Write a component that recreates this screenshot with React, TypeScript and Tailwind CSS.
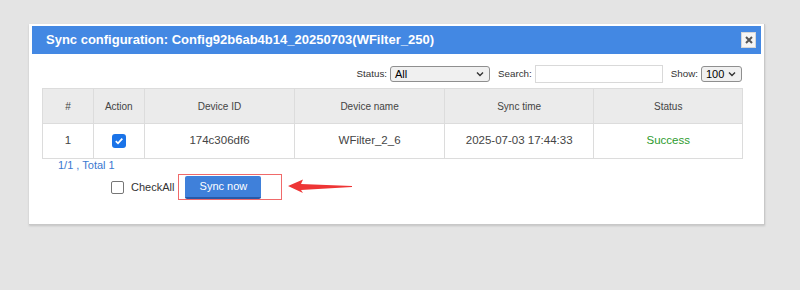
import React from 'react';

const font = { fontFamily: '"Liberation Sans", Arial, sans-serif' };

function Chevron() {
  return (
    <svg width="8" height="6" viewBox="0 0 8 6" className="shrink-0">
      <path d="M1 1.5 L4 4.5 L7 1.5" fill="none" stroke="#333" strokeWidth="1.4" />
    </svg>
  );
}

function FakeSelect({ value, width }: { value: string; width: string }) {
  return (
    <div className={`${width} h-[16px] flex items-center justify-between pl-[4px] pr-[5px] rounded-[3px] border border-[#8f8f8f] bg-[#f0f0f0] text-[11px] text-black`}>
      <span>{value}</span>
      <Chevron />
    </div>
  );
}

export default function App() {
  const cols = [
    { label: '#', w: 'w-[51px]' },
    { label: 'Action', w: 'w-[51px]' },
    { label: 'Device ID', w: 'w-[151px]' },
    { label: 'Device name', w: 'w-[150px]' },
    { label: 'Sync time', w: 'w-[150px]' },
    { label: 'Status', w: 'w-[148px]' },
  ];

  return (
    <div className="w-[800px] h-[290px] bg-[#e4e4e4] pt-[24px] pl-[29px]" style={font}>
      <div className="w-[736px] h-[201px] bg-white p-[2px] border-r border-b border-[#c8c8c8] shadow-[0_1px_2px_rgba(0,0,0,0.15)]">
        {/* title bar */}
        <div className="h-[28px] mx-[1px] bg-[#4388e3] flex items-center justify-between pl-[14px] pr-[5px]">
          <span className="text-white font-bold text-[13px]">
            Sync configuration: Config92b6ab4b14_20250703(WFilter_250)
          </span>
          <div className="w-[15px] h-[16px] bg-[#f5f5f5] border border-[#d6d6d6] flex items-center justify-center">
            <svg width="8" height="8" viewBox="0 0 8 8">
              <path d="M1 1 L7 7 M7 1 L1 7" stroke="#555" strokeWidth="2" />
            </svg>
          </div>
        </div>

        <div className="pl-[11px] pt-[11px]">
          {/* filter row */}
          <div className="w-[700px] h-[18px] flex items-center justify-end text-[9.8px] text-[#333]">
            <span>Status:</span>
            <div className="ml-[3px]">
              <FakeSelect value="All" width="w-[100px]" />
            </div>
            <span className="ml-[8px]">Search:</span>
            <div className="ml-[3px] w-[128px] h-[18px] border border-[#d9d9d9] bg-white" />
            <span className="ml-[8px]">Show:</span>
            <div className="ml-[3px]">
              <FakeSelect value="100" width="w-[41px]" />
            </div>
          </div>

          {/* table */}
          <div className="mt-[5px] w-[701px] border border-[#dcdcdc]">
            <div className="flex h-[35px] bg-[#ebebeb] border-b border-[#dcdcdc]">
              {cols.map((c, i) => (
                <div
                  key={c.label}
                  className={`${c.w} flex items-center justify-center text-[10px] text-[#444] ${i < cols.length - 1 ? 'border-r border-[#dcdcdc]' : ''}`}
                >
                  {c.label}
                </div>
              ))}
            </div>
            <div className="flex h-[34px] bg-white text-[11.5px] text-[#444]">
              <div className="w-[51px] border-r border-[#dcdcdc] flex items-center justify-center">1</div>
              <div className="w-[51px] border-r border-[#dcdcdc] flex items-center justify-center">
                <div className="w-[14px] h-[14px] rounded-[3px] bg-[#1a73e8] flex items-center justify-center">
                  <svg width="10" height="10" viewBox="0 0 10 10">
                    <path d="M1.8 5.2 L4 7.3 L8.3 2.6" fill="none" stroke="white" strokeWidth="1.8" />
                  </svg>
                </div>
              </div>
              <div className="w-[151px] border-r border-[#dcdcdc] flex items-center justify-center">174c306df6</div>
              <div className="w-[150px] border-r border-[#dcdcdc] flex items-center justify-center">WFilter_2_6</div>
              <div className="w-[150px] border-r border-[#dcdcdc] flex items-center justify-center">2025-07-03 17:44:33</div>
              <div className="w-[148px] flex items-center justify-center text-[#2e9b2e]">Success</div>
            </div>
          </div>

          <div className="pl-[16px] h-[12px] flex items-center text-[11px] text-[#3b78d0]">1/1 , Total 1</div>

          {/* actions */}
          <div className="mt-[3px] flex items-center h-[26px]">
            <div className="ml-[69px] w-[13px] h-[13px] rounded-[2px] border-[1.5px] border-[#767676] bg-white" />
            <span className="ml-[7px] text-[11px] text-[#333]">CheckAll</span>
            <div className="ml-[4px] w-[104px] h-[26px] border border-[#f06a6a] flex items-center pl-[6px]">
              <button className="w-[76px] h-[23px] rounded-[2px] bg-[#3f80da] border-b-2 border-[#2859a8] text-white text-[11px]">
                Sync now
              </button>
            </div>
            <svg width="66" height="16" viewBox="0 0 66 16" className="ml-[6px]">
              <path d="M0 7 L15 0.5 L13 5 L64 7 L64 8 L13 11 L15 14 Z" fill="#ee3535" />
            </svg>
          </div>
        </div>
      </div>
    </div>
  );
}
